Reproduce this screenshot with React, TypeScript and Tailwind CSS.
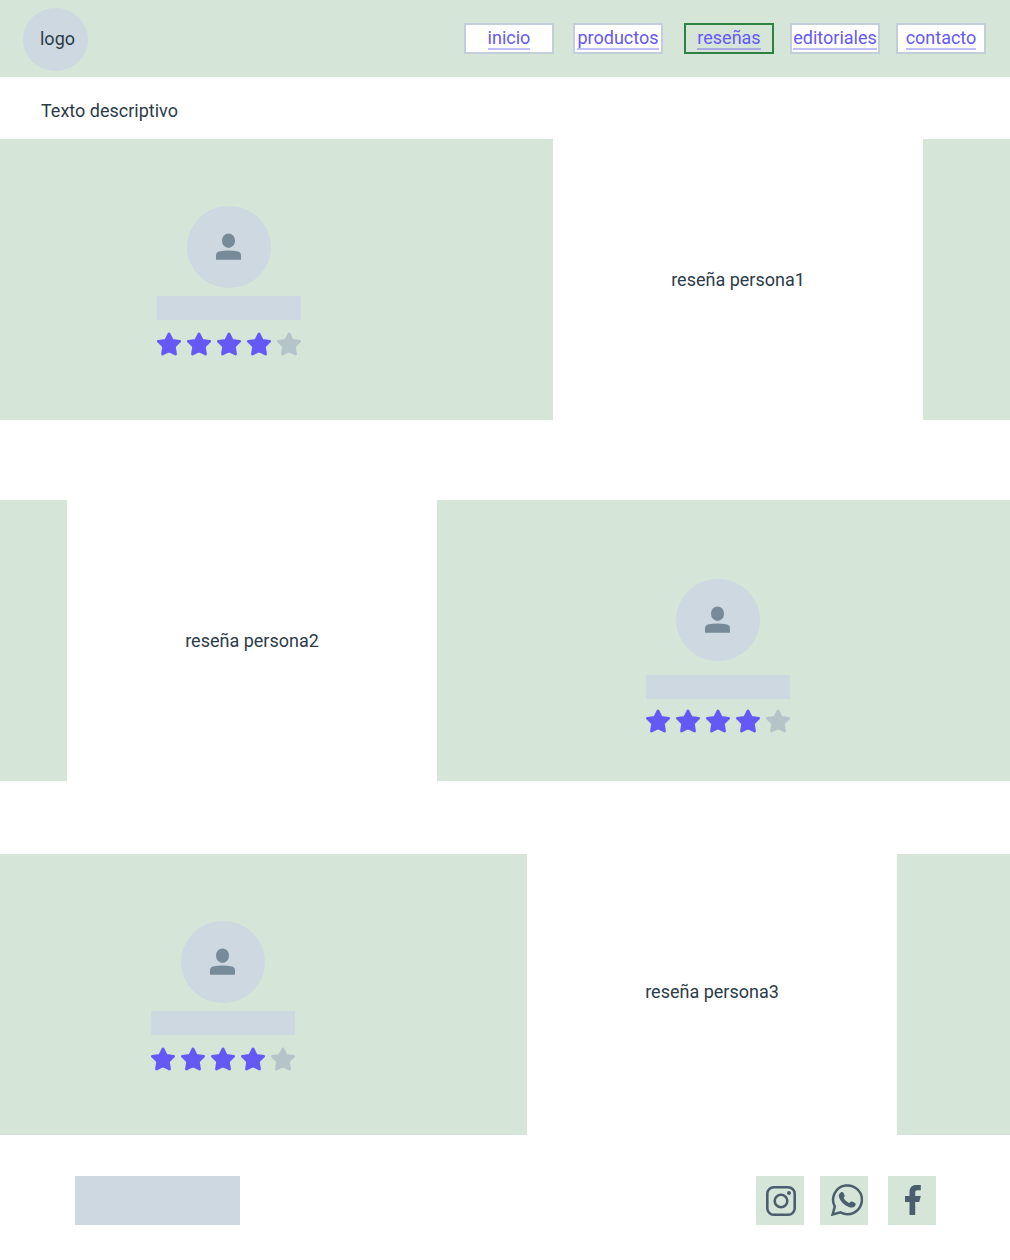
type Review = {
  text: string;
  reversed?: boolean;
  columns: string;
  cardPadding: string;
  barGap: string;
  starGap: string;
  textPadding: string;
};

const links = [
  { label: "inicio", spacing: "" },
  { label: "productos", spacing: "ml-[19px]" },
  { label: "reseñas", spacing: "ml-[21px]", active: true },
  { label: "editoriales", spacing: "ml-4" },
  { label: "contacto", spacing: "ml-4" },
];

const reviews: Review[] = [
  {
    text: "reseña persona1",
    columns: "grid-cols-[553fr_370fr_87fr]",
    cardPadding: "pt-[67px] pl-[157px]",
    barGap: "mt-2",
    starGap: "mt-3",
    textPadding: "",
  },
  {
    text: "reseña persona2",
    reversed: true,
    columns: "grid-cols-[67fr_370fr_573fr] mt-20",
    cardPadding: "pt-[79px] pl-[209px]",
    barGap: "mt-[14px]",
    starGap: "mt-[10px]",
    textPadding: "",
  },
  {
    text: "reseña persona3",
    columns: "grid-cols-[527fr_370fr_113fr] mt-[73px]",
    cardPadding: "pt-[67px] pl-[151px]",
    barGap: "mt-2",
    starGap: "mt-3",
    textPadding: "pb-1.5",
  },
];

function Person() {
  return (
    <svg width="26" height="28" viewBox="0 0 26 28" fill="#778a98" aria-hidden="true">
      <ellipse cx="12.5" cy="7.7" rx="6.5" ry="7.3" />
      <path d="M0 26.8V22.5Q0 19.4 3 18.6Q7.5 17.4 12.5 17.4T22 18.6Q25 19.4 25 22.5V26.8Z" />
    </svg>
  );
}

function Star({ filled }: { filled: boolean }) {
  return (
    <svg
      width="24"
      height="24"
      viewBox="0 0 24 24"
      className={filled ? "text-[#6558f5]" : "text-[#b4c4c8]"}
      aria-hidden="true"
    >
      <path
        d="M12 2L15.2 8.4L22.6 9.3L17.3 14.4L18.5 22L12 18.8L5.5 22L6.7 14.4L1.4 9.3L8.8 8.4Z"
        fill="currentColor"
        stroke="currentColor"
        strokeWidth="2.8"
        strokeLinejoin="round"
      />
    </svg>
  );
}

function Profile({ review }: { review: Review }) {
  return (
    <div className={`bg-[#d5e5d8] ${review.cardPadding}`}>
      <div className="flex w-36 flex-col items-center">
        <div className="flex h-[82px] w-[84px] items-center justify-center rounded-[50%] bg-[#cdd8e1]">
          <Person />
        </div>
        <div className={`h-6 w-full bg-[#cdd8e1] ${review.barGap}`} />
        <div className={`flex gap-1.5 ${review.starGap}`} role="img" aria-label="4 de 5 estrellas">
          {[1, 2, 3, 4, 5].map((n) => (
            <Star key={n} filled={n <= 4} />
          ))}
        </div>
      </div>
    </div>
  );
}

function ReviewRow({ review }: { review: Review }) {
  const profile = <Profile review={review} />;
  const side = <div className="bg-[#d5e5d8]" />;
  return (
    <section className={`grid min-h-[281px] ${review.columns}`}>
      {review.reversed ? side : profile}
      <div className={`flex items-center justify-center ${review.textPadding}`}>
        <p>{review.text}</p>
      </div>
      {review.reversed ? profile : side}
    </section>
  );
}

function Instagram() {
  return (
    <svg width="32" height="32" viewBox="0 0 32 32" fill="none" stroke="#4b5e6e" strokeWidth="2.6" aria-hidden="true">
      <rect x="2.3" y="3.3" width="27.4" height="27.4" rx="6.5" />
      <circle cx="16" cy="17" r="6.3" />
      <circle cx="24" cy="9" r="2" fill="#4b5e6e" stroke="none" />
    </svg>
  );
}

function Whatsapp() {
  return (
    <svg width="32" height="32" viewBox="0 0 32 32" fill="none" aria-hidden="true">
      <path
        d="M1.6 30.5L3.8 22.6A14.4 14.4 0 1 1 9.5 28.4Z"
        stroke="#4b5e6e"
        strokeWidth="2.5"
      />
      <path
        d="M9.7 8.4C10.6 7.7 12 7.8 12.4 8.7L13.6 11.4C14 12.3 13.3 13.1 12.6 13.8C13.7 16.1 15.7 18 18.2 19.1L19.8 17.8C20.4 17.3 21 17.4 21.6 17.7L24 18.9C25 19.5 24.8 21 24 21.9C22.5 23.5 20.2 24 17.8 23C12.8 21.1 9.5 17.5 8 13.2C7.4 11.2 8.2 9.5 9.7 8.4Z"
        fill="#4b5e6e"
      />
    </svg>
  );
}

function Facebook() {
  return (
    <svg width="32" height="32" viewBox="0 0 32 32" fill="#4b5e6e" aria-hidden="true">
      <path d="M13.5 31V18H9V12H13.5V8.3C13.5 3.5 16 1 20.2 1H24.8V6.2H21.8C19.9 6.2 19.2 7 19.2 8.6V12H24.8L23.2 18H19.2V31Z" />
    </svg>
  );
}

export default function App() {
  return (
    <div className="min-h-screen bg-white font-['Roboto',sans-serif] text-lg leading-6 text-[#2b3b48]">
      <header className="flex h-[77px] items-center bg-[#d5e5d8] pr-6 pl-[23px]">
        <a
          href="#inicio"
          className="mb-[-1px] flex h-[63px] w-[65px] items-center justify-center rounded-[50%] bg-[#cdd8e1] pl-1"
        >
          logo
        </a>
        <nav className="ml-auto flex">
          {links.map((link) => (
            <a
              key={link.label}
              href={`#${link.label}`}
              className={`flex h-[31px] w-[90px] items-center justify-center border-2 text-[#6558f5] ${link.spacing} ${
                link.active ? "border-[#2d8242]" : "border-[#c3cedb] bg-white"
              }`}
            >
              <span className="border-b-2 border-[#6558f5]/40 leading-5">{link.label}</span>
            </a>
          ))}
        </nav>
      </header>

      <main>
        <h1 className="flex h-[62px] items-center pt-1.5 pl-[41px]">Texto descriptivo</h1>
        {reviews.map((review) => (
          <ReviewRow key={review.text} review={review} />
        ))}
      </main>

      <footer className="mt-[41px] flex justify-between pr-[74px] pl-[75px]">
        <div className="h-[49px] w-[165px] bg-[#cdd8e1]" />
        <div className="flex">
          <a href="#instagram" aria-label="Instagram" className="flex h-[49px] w-12 justify-center bg-[#d5e5d8] pt-2 pl-0.5">
            <Instagram />
          </a>
          <a href="#whatsapp" aria-label="WhatsApp" className="ml-4 flex h-[49px] w-12 justify-center bg-[#d5e5d8] pt-2 pl-1.5">
            <Whatsapp />
          </a>
          <a href="#facebook" aria-label="Facebook" className="ml-5 flex h-[49px] w-12 justify-center bg-[#d5e5d8] pt-2">
            <Facebook />
          </a>
        </div>
      </footer>
    </div>
  );
}
